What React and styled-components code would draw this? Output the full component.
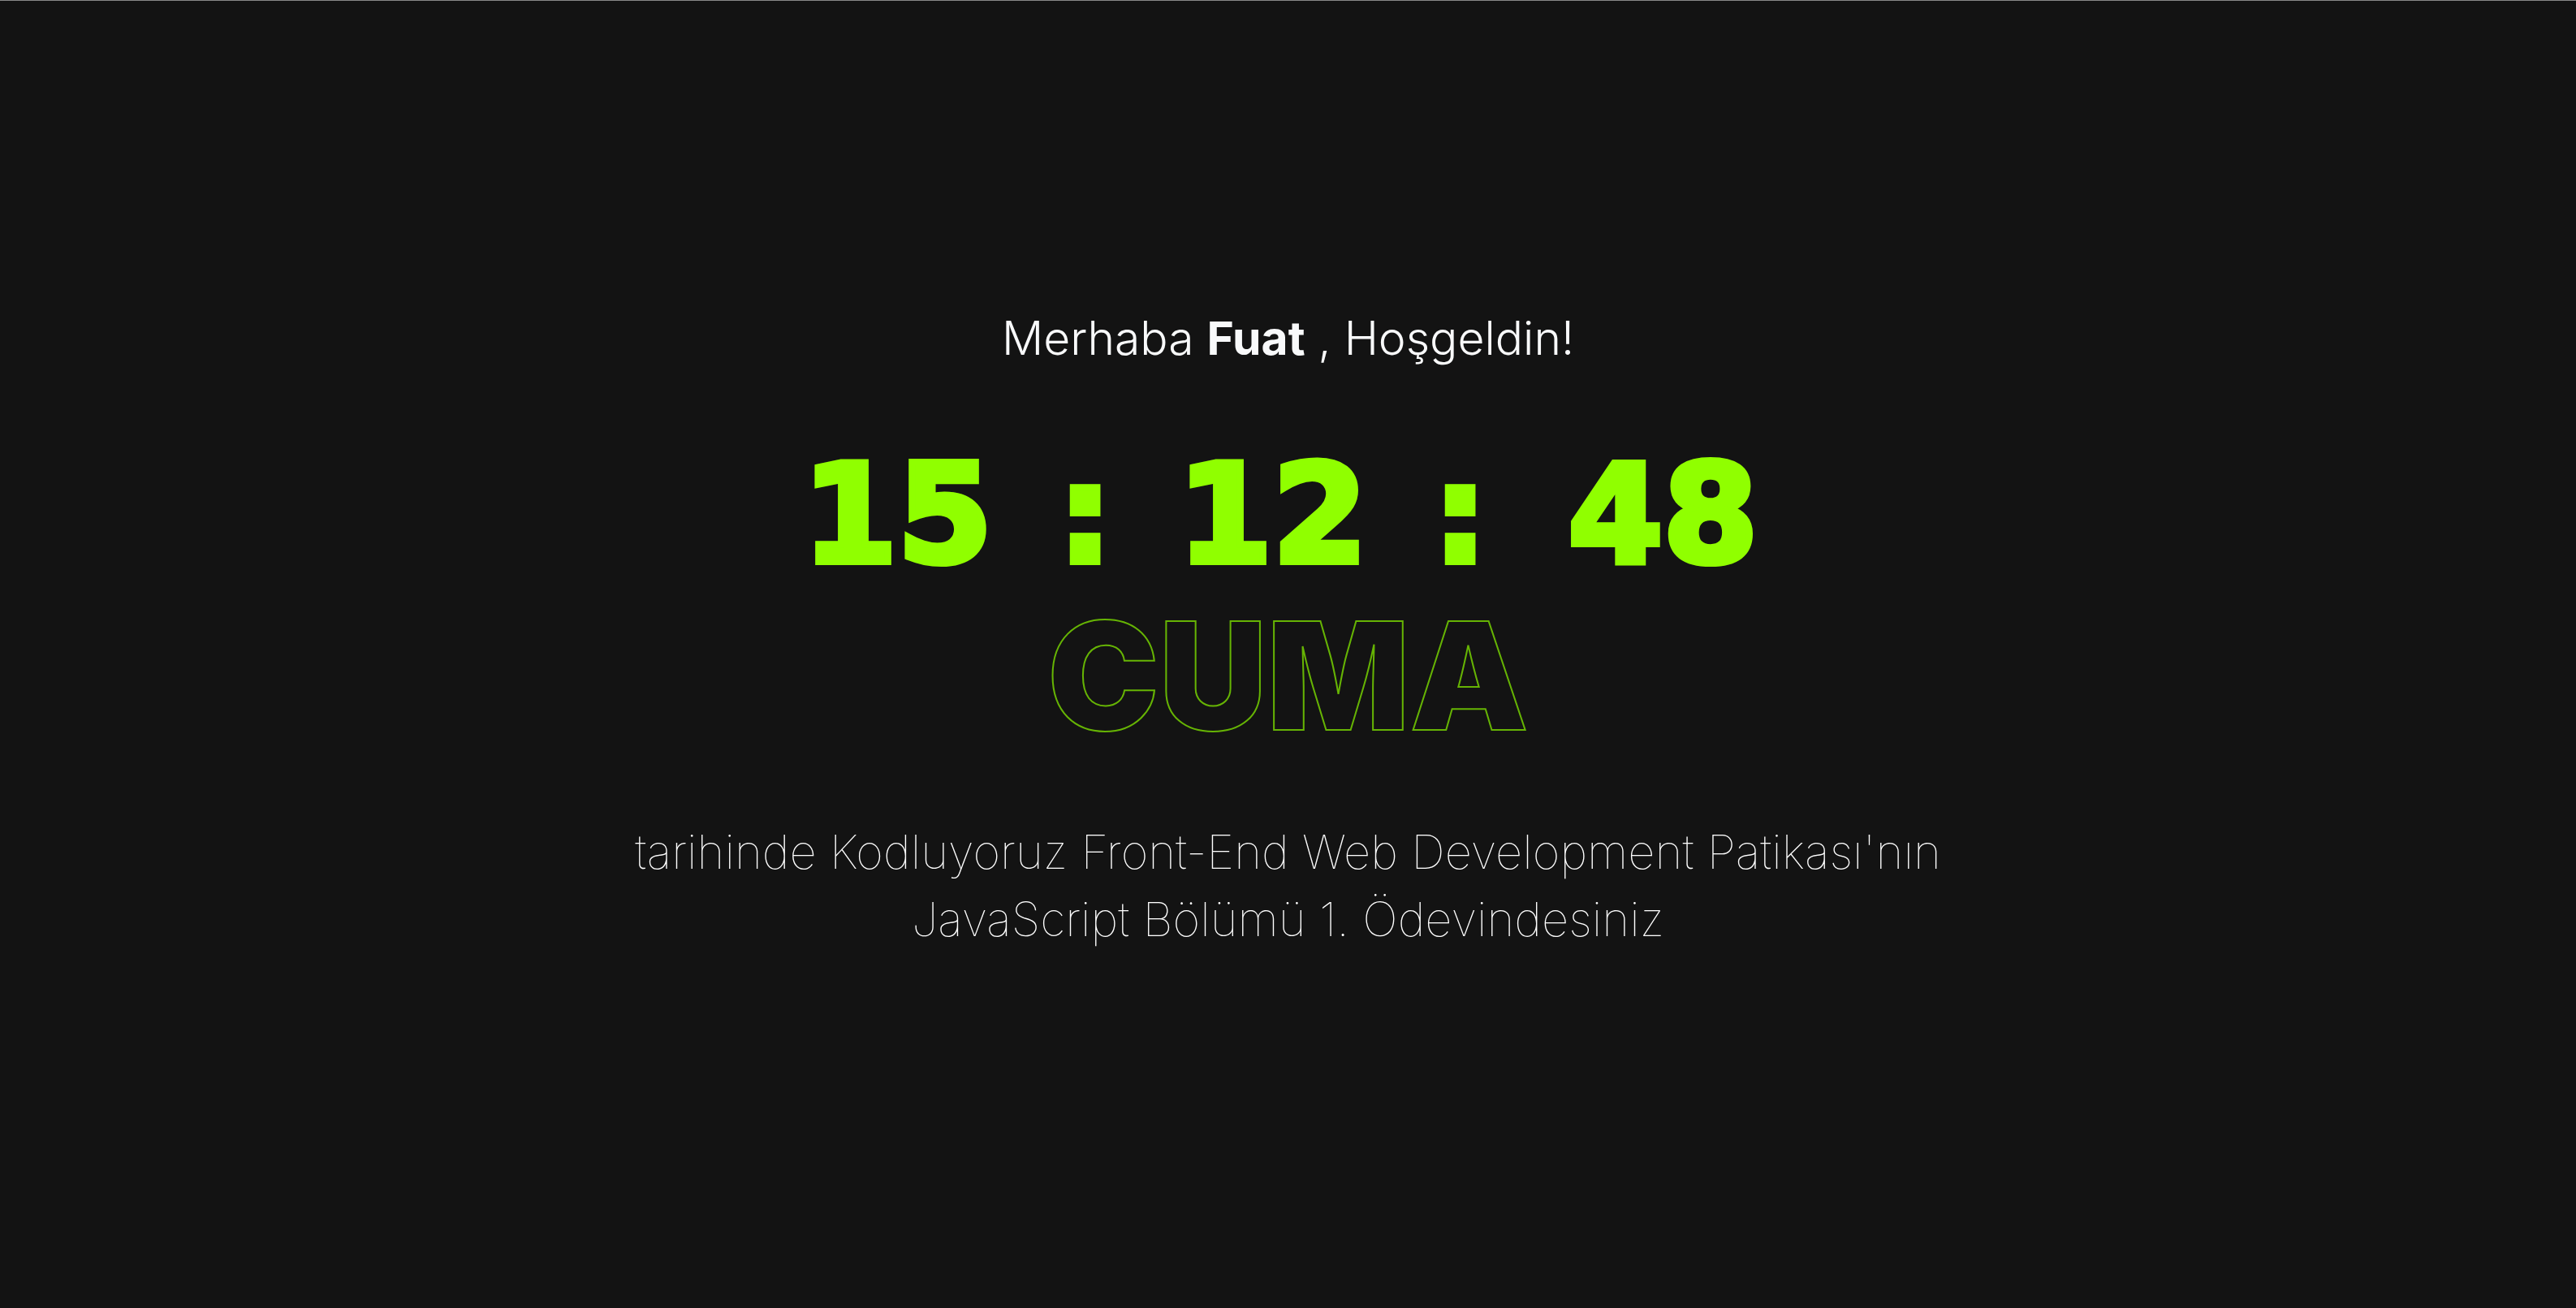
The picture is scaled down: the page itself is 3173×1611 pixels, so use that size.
import React from "react";
import styled, { createGlobalStyle } from "styled-components";

const GlobalStyle = createGlobalStyle`
  * {
    box-sizing: border-box;
  }
  body {
    margin: 0;
    background: #131313;
    color: #f8f9fa;
    font-family: "Inter", "Liberation Sans", sans-serif;
    font-optical-sizing: none;
  }
`;

const Page = styled.main`
  display: flex;
  flex-direction: column;
  align-items: center;
  justify-content: center;
  min-height: 100vh;
  padding: 0 24px 64px;
  border-top: 1px solid #888888;
  text-align: center;
`;

const Greeting = styled.h1`
  margin: 0;
  font-size: 57px;
  font-weight: 300;
  line-height: 83px;
`;

const Name = styled.strong`
  font-weight: 700;
`;

const Moment = styled.section`
  margin: 77px 0;
  color: #90ff00;
  line-height: 198px;
`;

const Clock = styled.time`
  display: grid;
  grid-template-columns: 248px 214px 248px 214px 286px;
  justify-content: center;
  font-family: "DejaVu Sans", sans-serif;
  font-size: 168px;
  font-weight: 700;
  -webkit-text-stroke: 8px #90ff00;
`;

const Day = styled.div`
  color: transparent;
  font-size: 184px;
  font-weight: 900;
  -webkit-text-stroke: 2px #66b404;
`;

const Description = styled.p`
  max-width: 1720px;
  margin: 0;
  color: #ffffff;
  font-size: 58px;
  font-weight: 100;
  line-height: 83px;
`;

export default function App() {
  const parts = ["15", ":", "12", ":", "48"];
  return (
    <>
      <GlobalStyle />
      <Page>
        <Greeting>
          Merhaba <Name>Fuat</Name> , Hoşgeldin!
        </Greeting>
        <Moment>
          <Clock dateTime="15:12:48">
            {parts.map((part, i) => (
              <span key={i}>{part}</span>
            ))}
          </Clock>
          <Day>CUMA</Day>
        </Moment>
        <Description>
          tarihinde Kodluyoruz Front-End Web Development Patikası'nın JavaScript
          Bölümü 1. Ödevindesiniz
        </Description>
      </Page>
    </>
  );
}
